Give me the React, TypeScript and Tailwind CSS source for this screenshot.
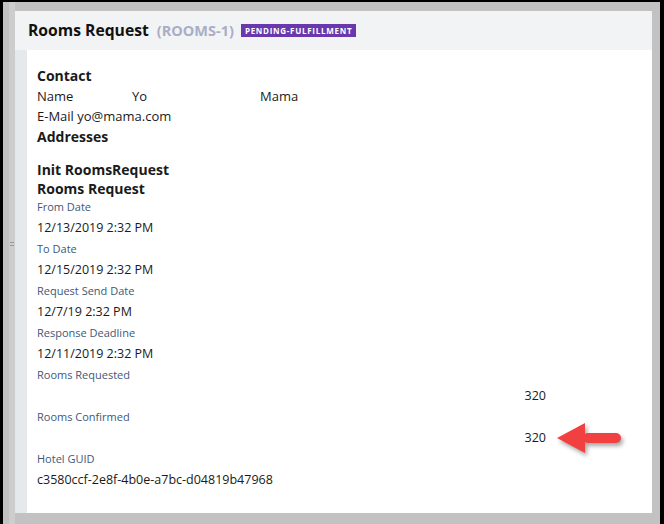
const FONT = "font-['Open_Sans',sans-serif]";

function Field({ label, value, right }: { label: string; value: string; right?: boolean }) {
  return (
    <div>
      <div className="h-[18px] text-[11px] leading-[18px] text-[#3e5878]">{label}</div>
      <div className={`h-[24px] text-[12.5px] leading-[24px] text-[#1a1a1a] ${right ? "w-[509px] text-right" : ""}`}>
        {value}
      </div>
    </div>
  );
}

function Arrow() {
  return (
    <svg
      className="absolute left-[518px] top-[-6px] h-[36px] w-[72px] drop-shadow-[2px_3px_2px_rgba(0,0,0,0.35)]"
      viewBox="0 0 72 36"
    >
      <polygon points="2,18 30,3 30,33" fill="#f24040" />
      <rect x="28" y="13" width="38" height="10" rx="5" fill="#f24040" />
    </svg>
  );
}

export default function App() {
  return (
    <div className={`${FONT} h-[524px] w-[664px] bg-black pl-[3px] pr-[4px] pt-[2px]`}>
      <div className="flex h-[522px] w-[657px] bg-[#c2c2c2]">
        {/* left gutter */}
        <div className="w-[6px]" />
        <div className="flex w-[6px] flex-col items-center bg-[#cdcdcd] pt-[240px]">
          <div className="h-[1px] w-[4px] bg-[#9a9a9a]" />
          <div className="mt-[2px] h-[1px] w-[4px] bg-[#9a9a9a]" />
        </div>
        <div className="mt-[9px] flex h-[502px] w-[637px] flex-col">
          {/* header */}
          <div className="flex h-[39px] items-center bg-[#f2f3f5] pl-[13px]">
            <span className="text-[15.7px] font-bold text-[#111]">Rooms Request</span>
            <span className="ml-[8px] text-[14.5px] font-bold text-[#a9aec6]">(ROOMS-1)</span>
            <span className="ml-[7px] flex h-[13px] items-center bg-[#6a38ad] px-[4px] text-[8px] font-bold tracking-[0.09em] text-white">
              PENDING-FULFILLMENT
            </span>
          </div>
          {/* body */}
          <div className="flex flex-1">
            <div className="w-[12px] bg-[#e5e9ec]" />
            <div className="flex-1 bg-white pl-[10px] pt-[16px] text-[#1a1a1a]">
              <div className="h-[20px] text-[14px] font-bold leading-[20px]">Contact</div>
              <div className="flex h-[20px] text-[13px] leading-[20px]">
                <span className="w-[95px]">Name</span>
                <span className="w-[128px]">Yo</span>
                <span>Mama</span>
              </div>
              <div className="h-[20px] text-[13px] leading-[20px]">E-Mail yo@mama.com</div>
              <div className="h-[21px] text-[14px] font-bold leading-[21px]">Addresses</div>
              <div className="h-[12px]" />
              <div className="h-[21px] text-[14px] font-bold leading-[21px]">Init RoomsRequest</div>
              <div className="h-[18px] text-[14px] font-bold leading-[18px]">Rooms Request</div>
              <Field label="From Date" value="12/13/2019 2:32 PM" />
              <Field label="To Date" value="12/15/2019 2:32 PM" />
              <Field label="Request Send Date" value="12/7/19 2:32 PM" />
              <Field label="Response Deadline" value="12/11/2019 2:32 PM" />
              <Field label="Rooms Requested" value="320" right />
              <div>
                <div className="h-[18px] text-[11px] leading-[18px] text-[#3e5878]">Rooms Confirmed</div>
                <div className="relative h-[24px] w-[509px] text-right text-[12.5px] leading-[24px]">
                  320
                  <Arrow />
                </div>
              </div>
              <Field label="Hotel GUID" value="c3580ccf-2e8f-4b0e-a7bc-d04819b47968" />
            </div>
          </div>
        </div>
      </div>
    </div>
  );
}
